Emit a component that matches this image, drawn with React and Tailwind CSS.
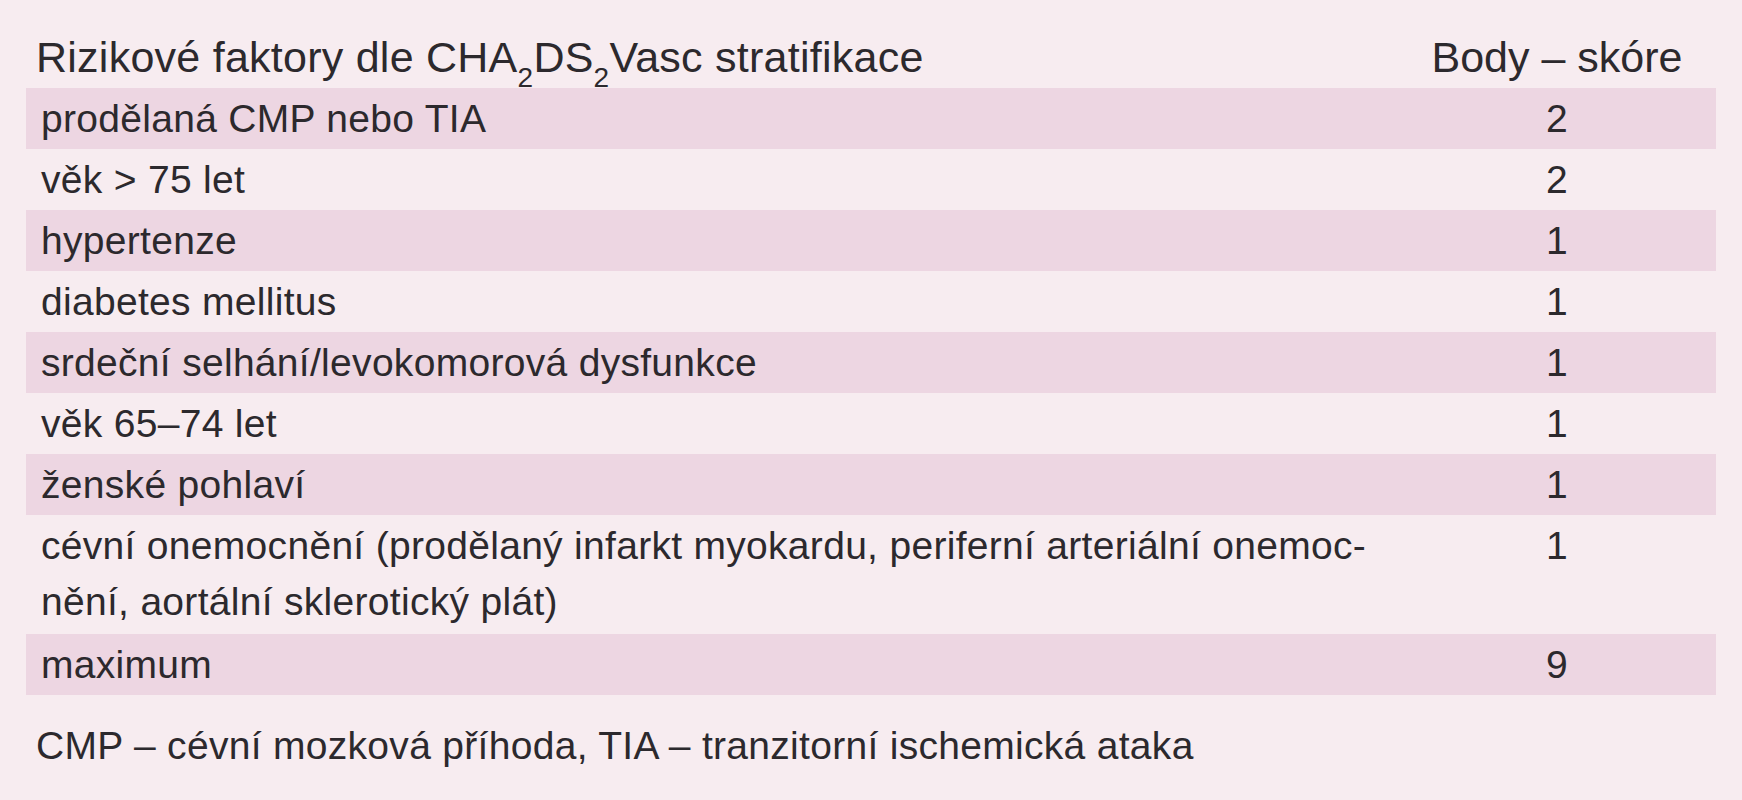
import React from "react";

const rows = [
  { label: "prodělaná CMP nebo TIA", score: "2" },
  { label: "věk > 75 let", score: "2" },
  { label: "hypertenze", score: "1" },
  { label: "diabetes mellitus", score: "1" },
  { label: "srdeční selhání/levokomorová dysfunkce", score: "1" },
  { label: "věk 65–74 let", score: "1" },
  { label: "ženské pohlaví", score: "1" },
  {
    label: (
      <>
        cévní onemocnění (prodělaný infarkt myokardu, periferní arteriální onemoc-
        <br />
        nění, aortální sklerotický plát)
      </>
    ),
    score: "1",
    tall: true,
  },
  { label: "maximum", score: "9" },
];

export default function App() {
  return (
    <div className="w-[1742px] h-[800px] overflow-hidden bg-[#f7ecf0] px-[26px] pt-[29px] text-[#2c292d] font-['Liberation_Sans',Arial,sans-serif]">
      <div className="flex h-[59px] text-[43px] leading-[56px]">
        <div className="flex-1 pl-[10px] whitespace-nowrap tracking-[0.25px]">
          Rizikové faktory dle CHA
          <span className="relative top-[15px] text-[28px] leading-none">2</span>
          DS
          <span className="relative top-[15px] text-[28px] leading-none">2</span>
          Vasc stratifikace
        </div>
        <div className="w-[318px] text-center whitespace-nowrap">Body – skóre</div>
      </div>
      <div className="flex flex-col text-[39px] leading-[56px] tracking-[0.3px]">
        {rows.map((r, i) => (
          <div
            key={i}
            className={
              "flex py-[2.5px] " +
              (i % 2 === 0 ? "bg-[#edd6e2] " : "") +
              (r.tall ? "pb-[4.5px]" : "")
            }
          >
            <div className="flex-1 pl-[15px] whitespace-nowrap">{r.label}</div>
            <div className="w-[318px] text-center">{r.score}</div>
          </div>
        ))}
      </div>
      <div className="mt-[23px] pl-[10px] text-[39px] leading-[56px] tracking-[0.3px] whitespace-nowrap">
        CMP – cévní mozková příhoda, TIA – tranzitorní ischemická ataka
      </div>
    </div>
  );
}
